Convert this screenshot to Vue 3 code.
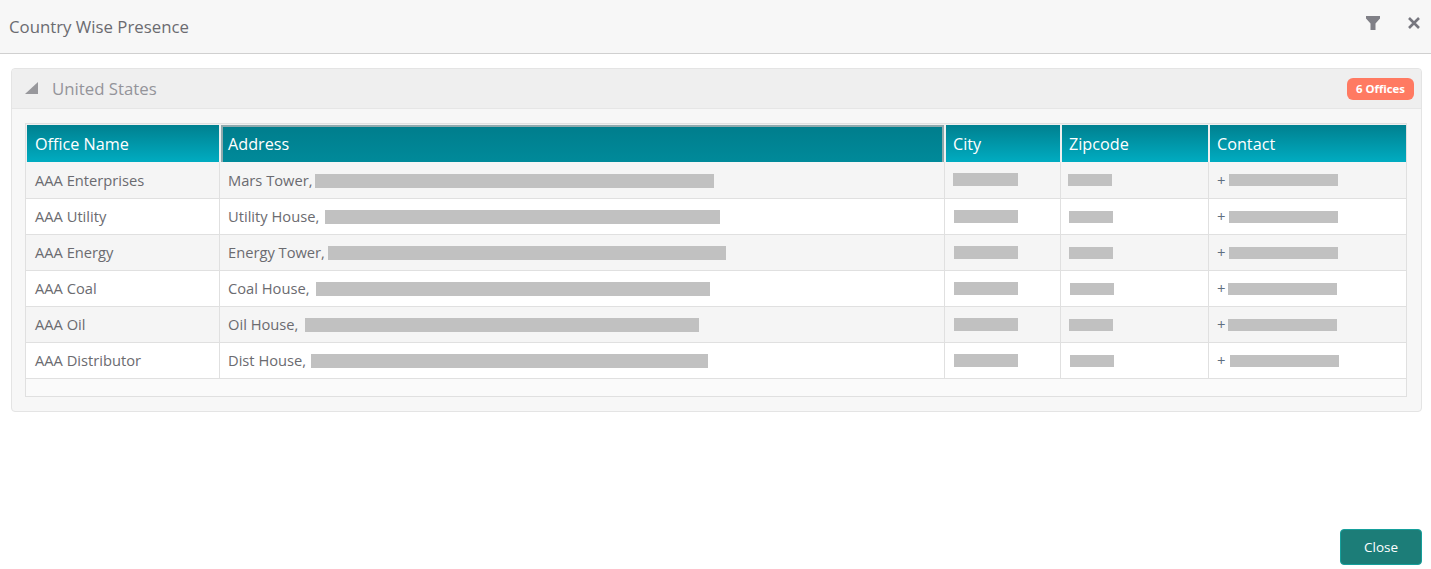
<script setup>
// widths and nudges of the blanked-out values, per row
const offices = [
  { name: 'AAA Enterprises', address: 'Mars Tower,', addrGap: -1, addr: 399, cityX: 0, city: 65, zipX: -1, zip: 44, telX: 4, tel: 109 },
  { name: 'AAA Utility', address: 'Utility House,', addrGap: 2, addr: 395, cityX: 1, city: 64, zipX: 0, zip: 44, telX: 4, tel: 109 },
  { name: 'AAA Energy', address: 'Energy Tower,', addrGap: -1, addr: 398, cityX: 1, city: 64, zipX: 0, zip: 44, telX: 4, tel: 109 },
  { name: 'AAA Coal', address: 'Coal House,', addrGap: 3, addr: 394, cityX: 1, city: 64, zipX: 1, zip: 44, telX: 3, tel: 109 },
  { name: 'AAA Oil', address: 'Oil House,', addrGap: 3, addr: 394, cityX: 1, city: 64, zipX: 0, zip: 44, telX: 3, tel: 109 },
  { name: 'AAA Distributor', address: 'Dist House,', addrGap: 1, addr: 397, cityX: 1, city: 64, zipX: 1, zip: 44, telX: 5, tel: 109 }
];
</script>

<template>
  <div class="dialog">
    <header class="dialog-header">
      <h1>Country Wise Presence</h1>
      <div class="header-actions">
        <svg width="14" height="14" viewBox="0 0 14 14"><path d="M0 0h14v2.500L9.500 7.500V14h-5V7.500L0 2.500z" fill="#808087" /></svg>
        <svg width="12" height="12" viewBox="0 0 12 12"><path d="M1 1l10 10M11 1L1 11" stroke="#77777f" stroke-width="2.600" fill="none" /></svg>
      </div>
    </header>

    <main class="dialog-body">
      <section class="panel">
        <div class="panel-header">
          <svg class="arrow" width="14" height="14" viewBox="0 0 14 14"><path d="M13 1v12H0z" fill="#98989c" /></svg>
          <span class="panel-title">United States</span>
          <span class="badge">6 Offices</span>
        </div>
        <div class="panel-content">
          <div class="table-wrap">
            <table>
              <colgroup>
                <col style="width: 194px" />
                <col style="width: 725px" />
                <col style="width: 116px" />
                <col style="width: 148px" />
                <col />
              </colgroup>
              <thead>
                <tr>
                  <th>Office Name</th>
                  <th class="sorted">Address</th>
                  <th>City</th>
                  <th>Zipcode</th>
                  <th>Contact</th>
                </tr>
              </thead>
              <tbody>
                <tr v-for="o in offices" :key="o.name">
                  <td>{{ o.name }}</td>
                  <td>{{ o.address }} <span class="redact" :style="{ width: o.addr + 'px', marginLeft: o.addrGap + 'px' }"></span></td>
                  <td><span class="redact city" :style="{ width: o.city + 'px', marginLeft: o.cityX + 'px' }"></span></td>
                  <td><span class="redact zip" :style="{ width: o.zip + 'px', marginLeft: o.zipX + 'px' }"></span></td>
                  <td><span class="plus">+</span><span class="redact zip" :style="{ width: o.tel + 'px', marginLeft: o.telX + 'px' }"></span></td>
                </tr>
              </tbody>
            </table>
          </div>
        </div>
      </section>
    </main>

    <footer class="dialog-footer">
      <button class="close-btn">Close</button>
    </footer>
  </div>
</template>

<style scoped>
.dialog {
  width: 1431px;
  height: 569px;
  display: flex;
  flex-direction: column;
  background: #fff;
  font-family: "Open Sans", "Noto Sans", sans-serif;
  overflow: hidden;
}
.dialog-header {
  height: 53px;
  flex: none;
  display: flex;
  align-items: center;
  justify-content: space-between;
  padding: 0 11px 0 9px;
  background: #f7f7f7;
  border-bottom: 1px solid #d0d0d0;
}
.dialog-header h1 {
  margin: 0;
  font-size: 16.800px;
  font-weight: 400;
  color: #6b6b70;
}
.header-actions {
  display: flex;
  align-items: center;
  gap: 28px;
  margin-bottom: 8px;
}
.dialog-body {
  flex: 1;
  padding: 14px 9px 0 11px;
}
.panel {
  border: 1px solid #e4e4e4;
  border-radius: 4px;
  background: #f7f7f7;
  height: 344px;
  box-sizing: border-box;
}
.panel-header {
  height: 39px;
  display: flex;
  align-items: center;
  padding: 0 7px 0 13px;
  background: #efefef;
  border-bottom: 1px solid #e6e6e6;
  border-radius: 4px 4px 0 0;
}
.arrow {
  margin-bottom: 1px;
}
.panel-title {
  margin-left: 13px;
  font-size: 16.800px;
  color: #94949a;
}
.badge {
  margin-left: auto;
  padding: 0 9px 0 8.500px;
  height: 22px;
  line-height: 21px;
  border-radius: 6px;
  background: #ff7a62;
  color: #fff;
  font-size: 11.400px;
  font-weight: 700;
}
.panel-content {
  padding: 14px 14px 0 13px;
}
.table-wrap {
  border: 1px solid #e0e0e0;
  background: #fafafa;
  height: 274px;
  box-sizing: border-box;
}
table {
  width: 100%;
  table-layout: fixed;
  border-collapse: separate;
  border-spacing: 0;
}
th {
  height: 38px;
  padding: 0 7px;
  text-align: left;
  font-size: 16.200px;
  font-weight: 400;
  color: #fff;
  background: linear-gradient(#007f8e, #00acc1);
  background-origin: border-box;
  border-style: solid;
  border-color: #f0f0f0;
  border-width: 1px 1px 0;
  box-sizing: border-box;
}
th:first-child {
  padding-left: 8px;
}
th:last-child {
  border-right: 0;
}
th.sorted {
  background: linear-gradient(#007d8c, #008a9a);
  box-shadow: inset 0 2px 0 #8fa9ad, inset 2px 0 0 #8fa9ad, inset -2px 0 0 #8fa9ad;
}
td {
  height: 36px;
  padding: 0 8px 1px;
  font-size: 14.700px;
  line-height: 20px;
  color: #6b6b70;
  border-right: 1px solid #e0e0e0;
  border-bottom: 1px solid #e0e0e0;
  box-sizing: border-box;
  white-space: nowrap;
  background: #fff;
}
td:first-child {
  padding-left: 9px;
}
tbody tr:first-child td {
  height: 37px;
  padding-bottom: 0;
}
tbody tr:nth-child(odd) td {
  background: #f5f5f5;
}
td:last-child {
  border-right: 0;
}
.redact {
  display: inline-block;
  height: 14px;
  background: #c1c1c1;
  vertical-align: -2px;
}
.redact.city {
  height: 13px;
  vertical-align: -1px;
}
.redact.zip {
  height: 12px;
  vertical-align: -1px;
}
tbody tr:first-child .redact.city,
tbody tr:first-child .redact.zip {
  vertical-align: 0;
}
.plus {
  font-size: 14.800px;
  color: #5f6f80;
}
.dialog-footer {
  display: flex;
  justify-content: flex-end;
  padding: 0 9px 4px 0;
}
.close-btn {
  width: 82px;
  height: 36px;
  background: #1c7d78;
  border: 1px solid #16a09c;
  border-radius: 4px;
  color: #fff;
  font-family: inherit;
  font-size: 13.500px;
  cursor: pointer;
}
</style>

<style>
body { background: #fff; }
</style>
